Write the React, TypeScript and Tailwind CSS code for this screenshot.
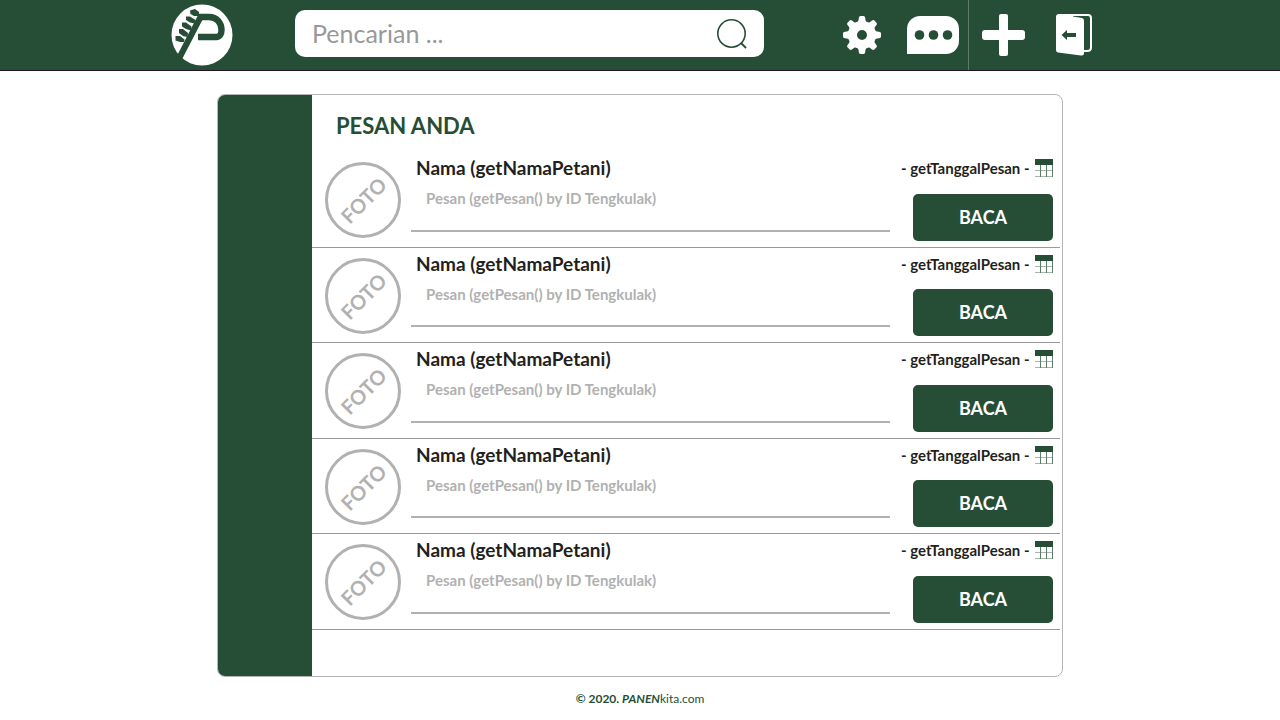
const messages = [1, 2, 3, 4, 5].map((id) => ({
  id,
  name: 'Nama (getNamaPetani)',
  text: 'Pesan (getPesan() by ID Tengkulak)',
  date: '- getTanggalPesan -',
}));

function Logo() {
  return (
    <svg viewBox="0 0 62 62" className="h-[62px] w-[62px]" aria-hidden="true">
      <circle cx="31" cy="31" r="30.5" fill="#fff" />
      <path d="M8 54.500 L29.500 13" fill="none" stroke="#264e36" strokeWidth="6" />
      <path
        d="M27 13 H38 C46 13 50.500 19 50.500 26 C50.500 30.500 48.500 33 45.500 33 H27"
        fill="none"
        stroke="#264e36"
        strokeWidth="6.4"
        strokeLinejoin="round"
      />
      <g fill="#264e36">
        <path d="M19 6.500 L24 5 L28 8 L28 12 L23 12 L19.500 10Z" />
        <path d="M15 12.500 L19 12.500 L24.500 16 L24 19.500 L19 18.500 L15 16Z" />
        <path d="M11 18.500 L15 18.500 L20.500 22.500 L20 26.500 L15 25 L11 22.500Z" />
        <path d="M8 25 L12 25 L17 29 L16.500 33 L12 32 L8 29Z" />
        <path d="M4.500 32 L9 32 L13.500 35.500 L13 38 L9 38 L4.500 36.500Z" />
      </g>
    </svg>
  );
}

function SearchIcon() {
  return (
    <svg viewBox="0 0 30 30" className="h-[30px] w-[30px]" fill="none" stroke="#264e36" aria-hidden="true">
      <circle cx="14.5" cy="14.5" r="13.7" strokeWidth="1.6" />
      <path d="M24 24 L29 29" strokeWidth="1.8" />
    </svg>
  );
}

const teeth = [0, 45, 90, 135, 180, 225, 270, 315];

function GearIcon() {
  return (
    <svg viewBox="-19 -19 38 38" className="h-[38px] w-[38px]" aria-hidden="true">
      <circle r="9.5" fill="none" stroke="#fff" strokeWidth="9" />
      {teeth.map((angle) => (
        <path
          key={angle}
          transform={`rotate(${angle})`}
          fill="#fff"
          d="M-5.5 -11.5 C-3.8 -13.5 -3.4 -14.5 -3.2 -17 Q-3 -19 -1.5 -19 L1.5 -19 Q3 -19 3.2 -17 C3.4 -14.5 3.8 -13.5 5.5 -11.5Z"
        />
      ))}
    </svg>
  );
}

function ChatIcon() {
  return (
    <svg viewBox="0 0 52 38" className="h-[38px] w-[52px]" aria-hidden="true">
      <path d="M0 38 V13 A13 13 0 0 1 13 0 H39 A13 13 0 0 1 52 13 V25 A13 13 0 0 1 39 38Z" fill="#fff" />
      <g fill="#264e36">
        <circle cx="12.5" cy="19" r="4.8" />
        <circle cx="26.5" cy="19" r="4.8" />
        <circle cx="40.5" cy="19" r="4.8" />
      </g>
    </svg>
  );
}

function PlusIcon() {
  return (
    <svg viewBox="0 0 43 42" className="h-[42px] w-[43px]" fill="#fff" aria-hidden="true">
      <rect x="17" y="0" width="9" height="42" rx="2" />
      <rect x="0" y="16" width="43" height="10" rx="3" />
    </svg>
  );
}

function ExitIcon() {
  return (
    <svg viewBox="0 0 36 42" className="h-[42px] w-[36px]" aria-hidden="true">
      <path d="M3 1 H32 Q35 1 35 4 V33.500 Q35 37 31 37 H27" fill="none" stroke="#fff" strokeWidth="2" />
      <path d="M0 3 Q0 0 3 0 H17 V2.500 L26 4 Q28 4.500 28 6.500 V39.500 Q28 42 25 41.500 L2 38.500 Q0 38 0 36Z" fill="#fff" />
      <path d="M5.500 21 L11 16 V19 H20 V23 H11 V26Z" fill="#264e36" />
    </svg>
  );
}

function CalendarIcon() {
  return (
    <svg viewBox="0 0 18 18" className="h-[18px] w-[18px] shrink-0" shapeRendering="crispEdges" aria-hidden="true">
      <rect width="18" height="6" fill="#264e36" />
      <path d="M0 11.500 H18 M0 17.500 H18" stroke="#a3b8aa" />
      <path d="M5.500 6 V18 M11.500 6 V18 M17.500 6 V18" stroke="#5d7d69" />
    </svg>
  );
}

export default function App() {
  return (
    <div className="flex min-h-screen flex-col bg-white font-['Lato',sans-serif] text-[#231f20]">
      <header className="border-b border-[#24141f] bg-[#264e36]">
        <div className="mx-auto flex h-[70px] w-full max-w-[938px] items-center pr-[17px]">
          <a href="#beranda" aria-label="PANENkita" className="shrink-0">
            <Logo />
          </a>
          <form
            role="search"
            onSubmit={(e) => e.preventDefault()}
            className="mb-[3px] ml-[62px] mr-[79px] flex h-[47px] min-w-0 flex-1 items-center rounded-[10px] bg-white pl-[17px] pr-[17px]"
          >
            <input
              type="search"
              aria-label="Pencarian"
              placeholder="Pencarian ..."
              className="min-w-0 flex-1 bg-transparent text-[25px] outline-none placeholder:text-[#999999]"
            />
            <button type="submit" aria-label="Cari">
              <SearchIcon />
            </button>
          </form>
          <nav className="flex h-full shrink-0 items-center">
            <button type="button" aria-label="Pengaturan" className="mr-[26px]">
              <GearIcon />
            </button>
            <button type="button" aria-label="Pesan" className="mr-[9px]">
              <ChatIcon />
            </button>
            <div className="mr-[13px] h-full w-px bg-[#5d7d69]" />
            <button type="button" aria-label="Tambah" className="mr-[31px]">
              <PlusIcon />
            </button>
            <button type="button" aria-label="Keluar">
              <ExitIcon />
            </button>
          </nav>
        </div>
      </header>

      <main className="mx-auto mt-[23px] flex w-full max-w-[846px] overflow-hidden rounded-lg border border-[#b5b5b5]">
        <aside className="w-[94px] shrink-0 bg-[#264e36]" />
        <section className="min-w-0 flex-1 pb-[46px] pr-[2px]">
          <h1 className="px-6 pb-3 pt-4 text-[22px] font-bold leading-[29px] text-[#264e36]">PESAN ANDA</h1>
          <ul className="grid min-h-[478px] auto-rows-fr">
            {messages.map((m) => (
              <li key={m.id} className="flex border-b border-[#999999] pl-[13px] pr-[7px]">
                <div className="mt-[10px] flex h-[76px] w-[76px] shrink-0 items-center justify-center rounded-full border-3 border-[#b1b1b1]">
                  <span className="-rotate-45 text-[20px] font-bold leading-none text-[#b1b1b1]">FOTO</span>
                </div>
                <div className="mb-[15px] ml-[10px] mr-[11px] min-w-0 flex-1 border-b-2 border-[#b1b1b1] pt-1">
                  <h2 className="truncate pl-[5px] text-[19px] font-bold leading-6">{m.name}</h2>
                  <p className="mt-2 truncate pl-[15px] text-[15px] font-bold leading-5 text-[#b1b1b1]">{m.text}</p>
                </div>
                <div className="flex w-[152px] shrink-0 flex-col pb-[6px] pt-[6px]">
                  <div className="flex h-5 items-center justify-between">
                    <time className="whitespace-nowrap text-[15px] font-bold leading-5">{m.date}</time>
                    <CalendarIcon />
                  </div>
                  <button
                    type="button"
                    className="mt-auto h-[47px] w-[140px] self-end rounded-[5px] bg-[#264e36] text-[18px] font-bold text-white"
                  >
                    BACA
                  </button>
                </div>
              </li>
            ))}
          </ul>
        </section>
      </main>

      <footer className="py-[13px] text-center text-[12px] leading-[18px] text-[#264e36]">
        <b>© 2020. <i>PANEN</i></b>kita.com
      </footer>
    </div>
  );
}
